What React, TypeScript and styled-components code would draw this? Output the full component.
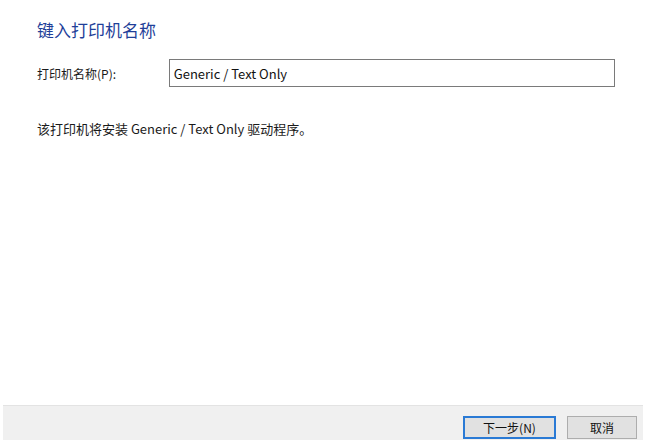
import React from "react";
import styled, { createGlobalStyle } from "styled-components";

const Global = createGlobalStyle`
  html, body { margin: 0; padding: 0; background: #ffffff; }
  body { font-family: "Noto Sans CJK SC", "Noto Sans", sans-serif; }
`;

const Page = styled.div`
  width: 655px;
  height: 447px;
  display: flex;
  flex-direction: column;
  background: #ffffff;
  overflow: hidden;
`;

const Content = styled.div`
  flex: 1;
  display: flex;
  flex-direction: column;
  padding: 19px 40px 0 37px;
`;

const Title = styled.h1`
  margin: 0;
  font-size: 17px;
  font-weight: 400;
  line-height: 22px;
  color: #1f3f99;
`;

const FieldRow = styled.div`
  display: flex;
  align-items: center;
  margin-top: 18px;
`;

const Label = styled.label`
  width: 132px;
  font-size: 12px;
  color: #1a1a1a;
`;

const TextBox = styled.div`
  box-sizing: border-box;
  width: 447px;
  height: 28px;
  border: 1px solid #7a7a7a;
  display: flex;
  align-items: center;
  padding-left: 4px;
  font-size: 13px;
  color: #111;
`;

const Description = styled.p`
  margin: 32px 0 0;
  font-size: 13px;
  color: #1a1a1a;
`;

const Footer = styled.div`
  box-sizing: border-box;
  height: 35px;
  margin: 0 12px 7px 3px;
  background: #f0f0f0;
  border-top: 1px solid #e3e3e3;
  display: flex;
  align-items: center;
  justify-content: flex-end;
  gap: 11px;
  padding: 0 6px 0 0;
`;

const Button = styled.button<{ $primary?: boolean }>`
  box-sizing: border-box;
  width: ${(p) => (p.$primary ? "93px" : "70px")};
  height: 23px;
  margin-top: 10px;
  align-self: flex-start;
  background: #e1e1e1;
  border: ${(p) => (p.$primary ? "2px solid #2a7ad5" : "1px solid #adadad")};
  font-family: "Noto Sans CJK SC", "Noto Sans", sans-serif;
  font-size: 12px;
  color: #111;
  padding: 0;
`;

export default function App() {
  return (
    <>
      <Global />
      <Page>
        <Content>
          <Title>键入打印机名称</Title>
          <FieldRow>
            <Label>打印机名称(P):</Label>
            <TextBox>Generic / Text Only</TextBox>
          </FieldRow>
          <Description>该打印机将安装 Generic / Text Only 驱动程序。</Description>
        </Content>
        <Footer>
          <Button $primary>下一步(N)</Button>
          <Button>取消</Button>
        </Footer>
      </Page>
    </>
  );
}
